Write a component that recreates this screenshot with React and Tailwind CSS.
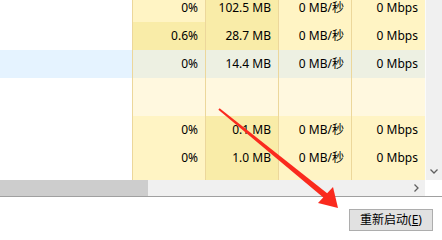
import React from "react";

const L = "bg-[#fff4c4]";
const D = "bg-[#f9eca8]";
const E = "bg-[#fff8df]";
const S = "bg-[#edf0e2]";

const rows = [
  { h: "h-[28px]", name: "bg-white", cells: [["0%", L], ["102.5 MB", D], ["0 MB/秒", L], ["0 Mbps", L]] },
  { h: "h-[28px]", name: "bg-white", cells: [["0.6%", D], ["28.7 MB", D], ["0 MB/秒", L], ["0 Mbps", L]] },
  { h: "h-[28px]", name: "bg-[#e5f3ff]", cells: [["0%", S], ["14.4 MB", S], ["0 MB/秒", S], ["0 Mbps", S]] },
  { h: "h-[38px]", name: "bg-white", cells: [["", E], ["", E], ["", E], ["", E]] },
  { h: "h-[28px]", name: "bg-white", cells: [["0%", L], ["0.1 MB", D], ["0 MB/秒", L], ["0 Mbps", L]] },
  { h: "h-[28px]", name: "bg-white", cells: [["0%", L], ["1.0 MB", D], ["0 MB/秒", L], ["0 Mbps", L]] },
  { h: "h-[14px]", name: "bg-white", cells: [["", L], ["", D], ["", L], ["", L]] },
];

const widths = ["w-[73px]", "w-[73px]", "w-[73px]", "w-[74px]"];

const Arrow = () => (
  <svg className="absolute left-0 top-0 pointer-events-none" width="442" height="240" viewBox="0 0 442 240">
    <polygon points="218.4,109.8 219.6,108.2 327.8,193.8 324.2,198.2" fill="#fa2a1e" />
    <polygon points="318,203 333,187 338,208" fill="#fa2a1e" />
  </svg>
);

const App = () => {
  return (
    <div className="relative w-[442px] h-[240px] overflow-hidden bg-white text-black font-['Noto_Sans','Noto_Sans_CJK_SC',sans-serif] text-[12px]">
      <div className="flex h-[180px]">
        <div className="w-[425px] h-[180px] overflow-hidden">
          <div className="-mt-[6px]">
            {rows.map((r, i) => (
              <div key={i} className={`flex ${r.h}`}>
                <div className={`w-[132px] ${r.name}`}></div>
                {r.cells.map(([t, bg], j) => (
                  <div
                    key={j}
                    className={`${widths[j]} ${bg} border-l border-[#ecd79b] flex items-center justify-end pr-[7px] whitespace-nowrap`}
                  >
                    {t}
                  </div>
                ))}
              </div>
            ))}
          </div>
        </div>
        <div className="w-[17px] bg-[#f0f0f0] border-l border-[#fbfbfb] flex flex-col justify-end">
          <div className="h-[17px] flex items-center justify-center">
            <svg width="8" height="5" viewBox="0 0 8 5">
              <path d="M0.5 0.5 L4 4 L7.5 0.5" stroke="#606060" strokeWidth="1.3" fill="none" />
            </svg>
          </div>
        </div>
      </div>
      <div className="flex h-[16px]">
        <div className="w-[148px] bg-[#cdcdcd]"></div>
        <div className="flex-1 bg-[#f0f0f0] flex items-center justify-end">
          <div className="w-[17px] h-[16px] flex items-center justify-center">
            <svg width="5" height="8" viewBox="0 0 5 8">
              <path d="M0.5 0.5 L4 4 L0.5 7.5" stroke="#606060" strokeWidth="1.3" fill="none" />
            </svg>
          </div>
        </div>
        <div className="w-[17px] bg-white"></div>
      </div>
      <div className="h-px bg-[#a0a0a0]"></div>
      <div className="flex justify-end pt-[12px] pr-[9px]">
        <button className="w-[84px] h-[22px] bg-[#e1e1e1] border border-[#adadad] flex items-center justify-center text-[12px] leading-none">
          重新启动(<span className="underline">E</span>)
        </button>
      </div>
      <Arrow />
    </div>
  );
};

export default App;
